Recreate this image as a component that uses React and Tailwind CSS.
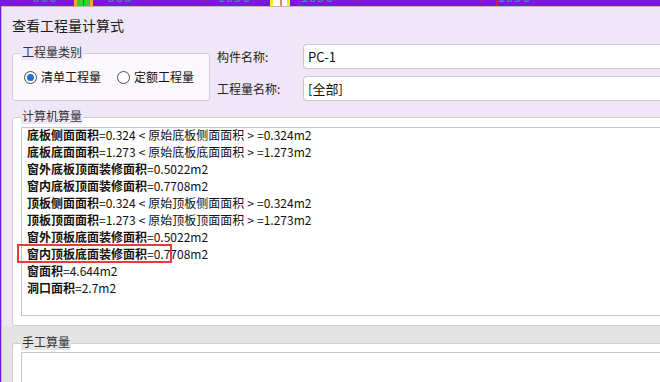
import React from "react";

const lines = [
  ["底板侧面面积", "=0.324<原始底板侧面面积>=0.324m2"],
  ["底板底面面积", "=1.273<原始底板底面面积>=1.273m2"],
  ["窗外底板顶面装修面积", "=0.5022m2"],
  ["窗内底板顶面装修面积", "=0.7708m2"],
  ["顶板侧面面积", "=0.324<原始顶板侧面面积>=0.324m2"],
  ["顶板顶面面积", "=1.273<原始顶板顶面面积>=1.273m2"],
  ["窗外顶板底面装修面积", "=0.5022m2"],
  ["窗内顶板底面装修面积", "=0.7708m2"],
  ["窗面积", "=4.644m2"],
  ["洞口面积", "=2.7m2"],
];

function TopStrip() {
  return (
    <div className="relative h-[6px] overflow-hidden">
      {/* bits of the desktop showing above the dialog */}
      <span className="absolute left-[32px] -top-[11px] text-[14px] leading-[16px] text-[#2f9a9a] font-['DejaVu_Sans_Mono',monospace]">000</span>
      <span className="absolute left-[107px] -top-[11px] text-[14px] leading-[16px] text-[#2f9a9a] font-['DejaVu_Sans_Mono',monospace]">000</span>
      <span className="absolute left-[217px] -top-[11px] text-[14px] leading-[16px] text-[#2f9a9a] font-['DejaVu_Sans_Mono',monospace]">1050</span>
      <span className="absolute left-[300px] -top-[11px] text-[14px] leading-[16px] text-[#2f9a9a] font-['DejaVu_Sans_Mono',monospace]">1050</span>
      <span className="absolute left-[497px] -top-[11px] text-[14px] leading-[16px] text-[#2f9a9a] font-['DejaVu_Sans_Mono',monospace]">1050</span>
      <div className="absolute left-[74px] top-0 h-full w-[19px] bg-[#f2a43a]">
        <div className="ml-[3px] h-full w-[13px] bg-[#34d034]" />
      </div>
      <div className="absolute left-[83px] top-0 h-full w-px bg-[#e02020]" />
      <div className="absolute left-[270px] top-0 flex h-full">
        <div className="w-[3px] bg-[#f0f020]" />
        <div className="w-[7px] bg-white" />
        <div className="w-[2px] bg-[#f08080]" />
        <div className="w-[5px] bg-white" />
        <div className="w-[3px] bg-[#f0f020]" />
      </div>
      <div className="absolute left-[17px] top-0 h-[2px] w-px bg-[#e02020]" />
      <div className="absolute left-[149px] top-0 h-[2px] w-px bg-[#e02020]" />
      <div className="absolute left-[204px] top-0 h-[2px] w-px bg-[#e02020]" />
      <div className="absolute left-[299px] top-0 h-full w-px bg-[#e02020]" />
      <div className="absolute left-[356px] top-0 h-[2px] w-px bg-[#e02020]" />
      <div className="absolute left-[480px] top-0 h-[2px] w-px bg-[#e02020]" />
      <div className="absolute left-[496px] top-0 h-full w-px bg-[#e02020]" />
    </div>
  );
}

function Radio({ checked, label }) {
  return (
    <label className="flex items-center gap-[4px]">
      <span className="flex h-[13px] w-[13px] items-center justify-center rounded-full border border-[#4a4a4a] bg-white">
        {checked && <span className="h-[7px] w-[7px] rounded-full bg-[#1f72d6]" />}
      </span>
      <span className="text-[12px] leading-[16px] text-[#111]">{label}</span>
    </label>
  );
}

function Field({ label, value }) {
  return (
    <div className="flex h-[25px] items-center">
      <span className="w-[86px] text-[12px] text-[#222]">{label}</span>
      <div className="flex h-full flex-1 items-center rounded-l-[4px] border border-r-0 border-[#c9c9c9] bg-white pl-[4px] text-[13px] text-[#111]">
        {value}
      </div>
    </div>
  );
}

// angle brackets are drawn with a bit of air around them, like the original
function Rest({ text }) {
  return text.split(/([<>])/).map((part, i) =>
    part === "<" || part === ">" ? (
      <span key={i} className="px-[3px]">{part}</span>
    ) : (
      <span key={i}>{part}</span>
    )
  );
}

export default function App() {
  return (
    <div className="h-[382px] w-[660px] overflow-hidden bg-[#7b18d9] font-['Noto_Sans_CJK_SC',sans-serif]">
      <TopStrip />
      <div className="ml-[1px] flex h-[376px] flex-col border-l border-t border-[#b9b9b9] bg-[#efe7f7]">
        {/* Title */}
        <div className="mt-[8px] pl-[10px] text-[14px] leading-[20px] text-[#1a1a1a]">查看工程量计算式</div>

        {/* Top row */}
        <div className="mt-[9px] flex">
          <div className="relative ml-[10px] mt-[9px] flex h-[48px] w-[198px] items-center gap-[16px] rounded-[3px] border border-[#cfcfcf] bg-[#faf8fc] pl-[11px]">
            <span className="absolute -top-[10px] left-[8px] bg-[#efe7f7] px-px text-[12px] leading-[16px] text-[#333]">工程量类别</span>
            <Radio checked label="清单工程量" />
            <Radio label="定额工程量" />
          </div>
          <div className="ml-[7px] flex flex-1 flex-col gap-[7px]">
            <Field label="构件名称:" value="PC-1" />
            <Field label="工程量名称:" value="[全部]" />
          </div>
        </div>

        {/* 计算机算量 */}
        <div className="relative ml-[10px] mt-[16px] h-[209px] w-[700px] shrink-0 rounded-[3px] border border-[#cfcfcf] bg-white pl-[8px] pt-[9px]">
          <span className="absolute -top-[10px] left-[8px] bg-[#efe7f7] px-px text-[12px] leading-[16px] text-[#333]">计算机算量</span>
          <div className="h-[189px] overflow-hidden border border-[#c8c8c8] bg-white pl-[5px]">
            <div className="-mt-[2px] text-[12px] leading-[17px] text-[#111]">
              {lines.map(([name, rest]) => (
                <div key={name} className="whitespace-nowrap">
                  <span className="font-bold">{name}</span>
                  <Rest text={rest} />
                </div>
              ))}
            </div>
          </div>
          {/* highlight */}
          <div className="absolute left-[4px] top-[126px] h-[19px] w-[155px] border-2 border-[#ec3a3a]" />
        </div>

        {/* 手工算量 */}
        <div className="flex-1 bg-[#e4e4e4] pl-[10px] pt-[17px]">
          <div className="relative h-[60px] w-[700px] rounded-[3px] border border-[#cfcfcf] bg-white pl-[8px] pt-[8px]">
            <span className="absolute -top-[10px] left-[8px] bg-[#e4e4e4] px-px text-[12px] leading-[16px] text-[#333]">手工算量</span>
            <div className="h-[80px] border border-[#c8c8c8] bg-white" />
          </div>
        </div>
      </div>
    </div>
  );
}
